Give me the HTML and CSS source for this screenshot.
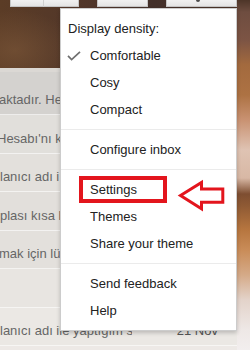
FILE: index.html
```html
<!DOCTYPE html>
<html lang="en">
<head>
<meta charset="utf-8">
<title>Settings menu</title>
<link rel="stylesheet" href="styles.css">
</head>
<body>
<div class="screen">
  <div class="topbar">
    <div class="btn-group">
      <div class="btn btn-a"></div>
      <div class="btn btn-b"></div>
    </div>
    <div class="btn btn-c"></div>
    <div class="btn btn-d"><span class="gear"></span></div>
  </div>
  <div class="band"></div>
  <div class="list">
    <div class="row row-first r1"><span class="snippet cut-1">aktadır. He</span></div>
    <div class="row r2"><span class="snippet cut-3">Hesabı'nı k</span></div>
    <div class="row r3"><span class="snippet">lanıcı adı i</span></div>
    <div class="row r4"><span class="snippet">plası kısa b</span></div>
    <div class="row r5"><span class="snippet cut-1">mak için lü</span></div>
    <div class="row r6"></div>
    <div class="row r7"><span class="snippet subject">lanıcı adı ile yaptığım sorgulama</span><span class="date">21 Nov</span></div>
    <div class="row r8"></div>
  </div>

  <div class="menu">
    <div class="menu-header">Display density:</div>
    <div class="menu-item"><span class="icon"><svg class="check" width="14" height="10" viewBox="0 0 14 10"><polyline points="1,4.8 4.6,8.6 13,0.8" fill="none" stroke="#6f6f6f" stroke-width="1.7"/></svg></span>Comfortable</div>
    <div class="menu-item"><span class="icon"></span>Cosy</div>
    <div class="menu-item"><span class="icon"></span>Compact</div>
    <div class="sep"></div>
    <div class="menu-item"><span class="icon"></span>Configure inbox</div>
    <div class="sep"></div>
    <div class="menu-item"><span class="icon"></span>Settings<span class="hl"></span><svg class="arrow" width="52" height="36" viewBox="0 0 52 36"><polygon points="5.5,17.6 26.5,4.5 26.5,11 47.8,11 47.8,24.2 26.5,24.2 26.5,30.8" fill="none" stroke="#e3151d" stroke-width="3"/></svg></div>
    <div class="menu-item"><span class="icon"></span>Themes</div>
    <div class="menu-item"><span class="icon"></span>Share your theme</div>
    <div class="sep"></div>
    <div class="menu-item"><span class="icon"></span>Send feedback</div>
    <div class="menu-item"><span class="icon"></span>Help</div>
  </div>
</div>
</body>
</html>
```
FILE: styles.css
```css
html, body {
  margin: 0;
  padding: 0;
}

body {
  width: 250px;
  height: 350px;
  overflow: hidden;
  font-family: "Liberation Sans", Arial, sans-serif;
  font-size: 13px;
}

.screen {
  position: relative;
  width: 250px;
  height: 350px;
  overflow: hidden;
  background: linear-gradient(to bottom,
    #4d3528 0px, #6e4d40 12px, #7c5444 40px, #a36a3e 65px,
    #ad7243 95px, #c99272 120px, #dfc3b3 150px, #d8b8a5 178px,
    #7e4e31 194px, #8f5a34 206px, #b7763f 230px, #c98c58 250px,
    #d5aa88 275px, #e3d3ca 300px, #eee8e6 330px, #f2eeee 350px);
}

/* top toolbar over the theme picture */
.topbar {
  width: 237px;
  height: 68px;
  box-sizing: border-box;
  padding-left: 10px;
  display: flex;
  align-items: flex-start;
  background:
    radial-gradient(ellipse 60px 40px at 15px 50px, rgba(125, 88, 58, 0.6), rgba(125, 88, 58, 0)),
    linear-gradient(to right, #5b3c26, #50362a 40%, #43302a 65%, #4c3428);
}

.btn-group {
  display: flex;
}

.btn {
  height: 7px;
  box-sizing: border-box;
  background: linear-gradient(#f1f1f1, #e4e4e4);
  border: 1px solid #c6c6c6;
  border-top: 0;
}

.btn-a {
  width: 34px;
  border-right-color: #d0d0d0;
}

.btn-b {
  width: 35px;
  border-left: 0;
}

.btn-c {
  width: 51px;
  margin-left: 18px;
}

.btn-d {
  width: 71px;
  margin-left: 18px;
}

.gear {
  display: block;
  width: 4px;
  height: 2px;
  margin-left: 29px;
  background: #4a4a4a;
  border-radius: 0 0 2px 2px;
}

.band {
  width: 237px;
  height: 4px;
  background: #dbd8d4;
}

/* message list */
.list {
  width: 237px;
}

.row {
  display: flex;
  justify-content: space-between;
  height: 38.5px;
  box-sizing: border-box;
  padding-top: 8.5px;
  padding-right: 19px;
  line-height: 29px;
  border-bottom: 1px solid rgba(255, 255, 255, 0.6);
  color: #666;
  white-space: nowrap;
  overflow: hidden;
}

.row-first {
  height: 43px;
  padding-top: 13px;
}

.r1 { background: #d4d2cf; }
.r2 { background: #e1dfdb; }
.r3 { background: #e3e0dc; }
.r4 { background: #e2dfdb; }
.r5 { background: #e3e0dc; }
.r6 { background: #e8e5e1; }
.r7 { background: #ebe8e4; }
.r8 { background: #ede9e6; }

.snippet {
  display: block;
}

.cut-1 { margin-left: -1px; }
.cut-3 { margin-left: -3px; }

.subject {
  width: 132px;
  overflow: hidden;
}

.date {
  color: #555;
}

/* dropdown menu */
.menu {
  position: absolute;
  left: 60px;
  top: 8px;
  width: 177px;
  box-sizing: border-box;
  padding: 6px 0;
  background: #fff;
  border: 1px solid rgba(0, 0, 0, 0.2);
  box-shadow: 0 2px 4px rgba(0, 0, 0, 0.2);
  color: #222;
}

.menu-header {
  height: 27px;
  line-height: 27px;
  padding-left: 7px;
}

.menu-item {
  position: relative;
  display: flex;
  align-items: center;
  height: 27px;
  line-height: 27px;
  padding-left: 6px;
  white-space: nowrap;
}

.icon {
  flex: 0 0 23px;
  display: flex;
  align-items: center;
}

.check {
  display: block;
  margin-top: 1px;
}

.sep {
  border-top: 1px solid #ebebeb;
  margin: 6px 0;
}

/* annotation over the Settings item */
.hl {
  position: absolute;
  left: 18px;
  top: 0;
  width: 88px;
  height: 27px;
  box-sizing: border-box;
  border: 4px solid #e3151d;
}

.arrow {
  position: absolute;
  left: 114px;
  top: 2px;
  overflow: visible;
}
```
